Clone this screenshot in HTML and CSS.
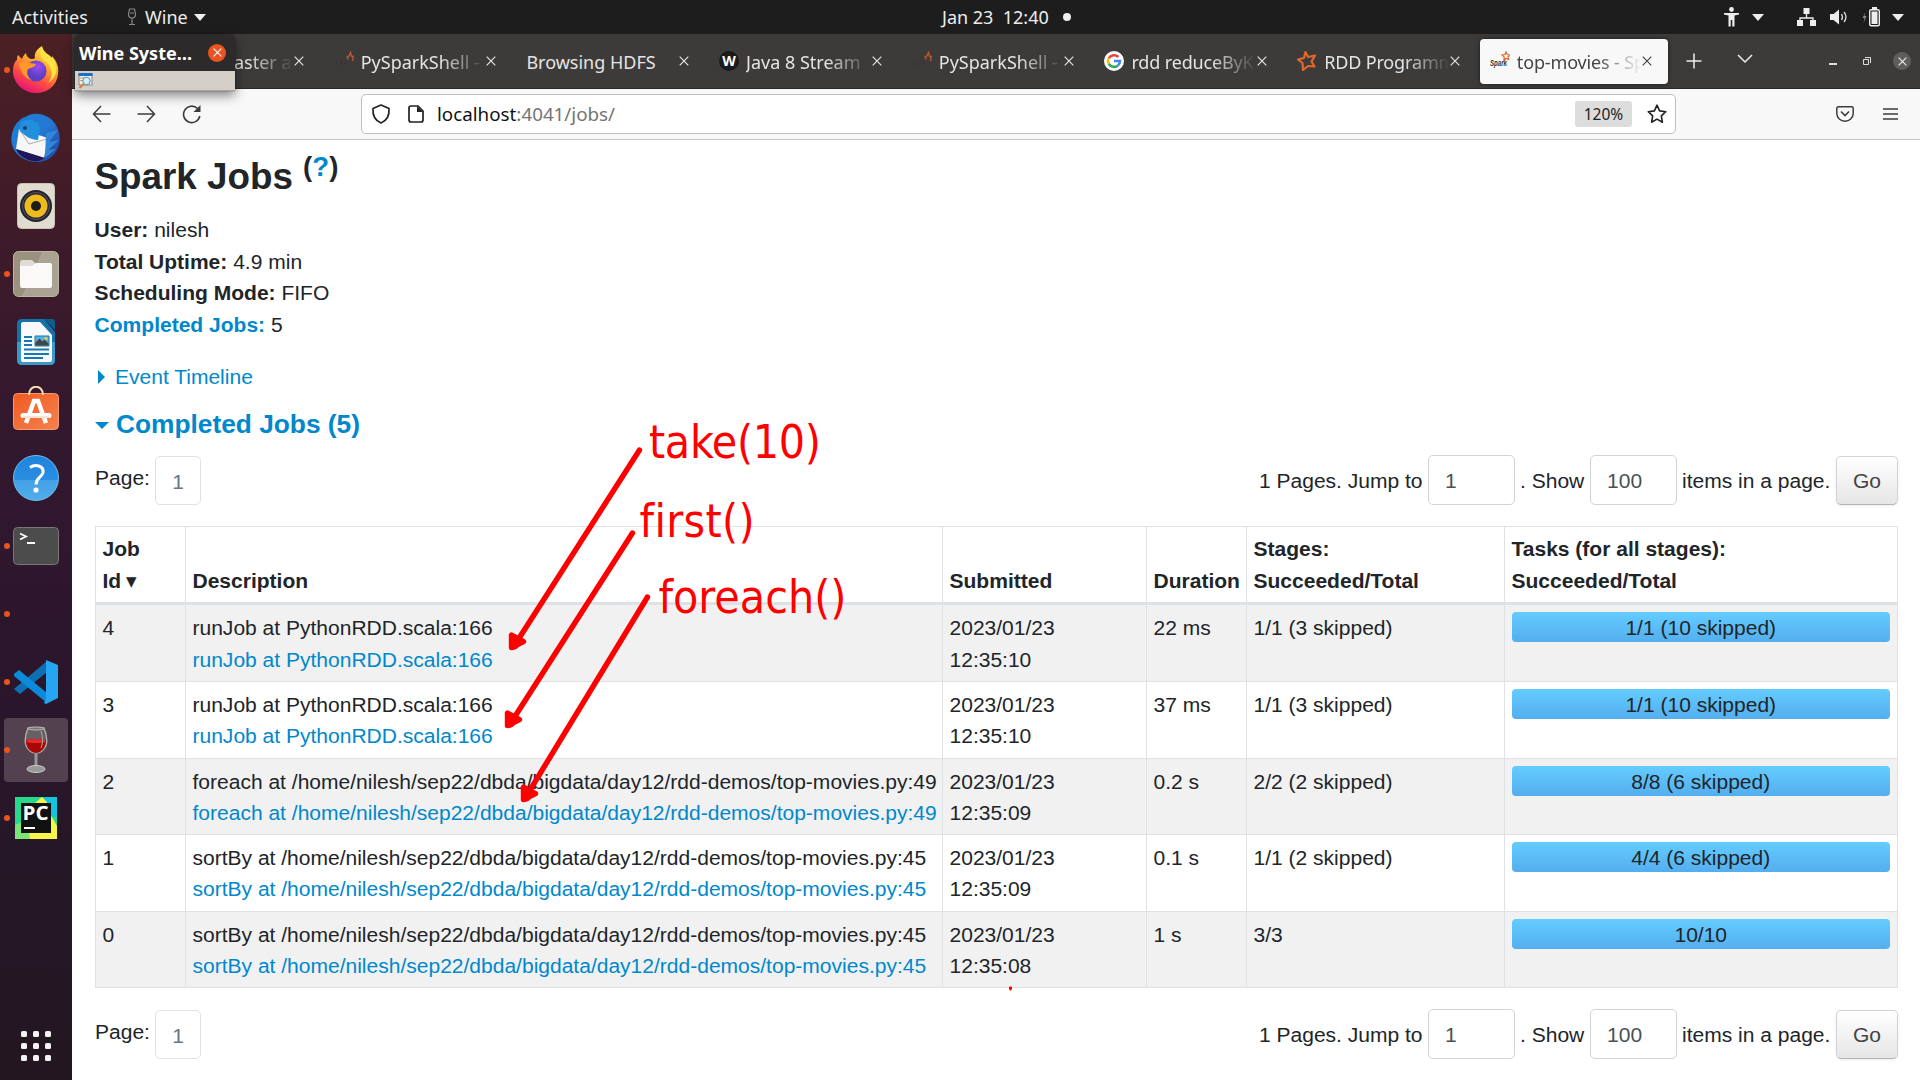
FILE: index.html
```html
<!DOCTYPE html>
<html lang="en">
<head>
<meta charset="utf-8">
<title>top-movies - Spark Jobs</title>
<link rel="stylesheet" href="styles.css">
</head>
<body>
<svg class="defs" width="0" height="0" aria-hidden="true">
  <symbol id="x" viewBox="0 0 10 10"><path d="M.7.7l8.6 8.6M9.3.7L.7 9.3" fill="none" stroke="currentColor" stroke-width="1.2"/></symbol>
  <symbol id="tri" viewBox="0 0 12 7"><path d="M0 0h12L6 7z" fill="currentColor"/></symbol>
  <symbol id="star-o" viewBox="0 0 20 20"><path d="M8.500 1l2.600 5 6.900-1.500-3.500 6 3 5-6.500-.5L6 19l-.5-7L1 8.500 7 7z" fill="none" stroke="#e2672b" stroke-width="2.200" stroke-linejoin="round"/></symbol>
  <symbol id="spark-mini" viewBox="0 0 20 20"><path d="M12.500 6l2.500-1 1.500-3.500L17.500 5l2.500.5-1.500 1.500.5 3M13.500 5.500l.5 3" fill="none" stroke="#b8572b" stroke-width="1.500"/><path d="M2 14l1-3M6 14l1-4M11 13l1-3" stroke="#343231"/></symbol>
</svg>

<header class="topbar">
  <span class="activities">Activities</span>
  <svg class="glass-mini" width="10" height="18" viewBox="0 0 10 18"><path d="M2.500 1h5l1 5c0 3-1.500 4-3.500 4S1.500 9 1.500 6zM5 10v6M2 16.500h6M3 5h4" fill="none" stroke="#8a8a8a" stroke-width="1.200"/></svg>
  <span class="appname">Wine</span>
  <svg class="tri" width="12" height="7"><use href="#tri"/></svg>
  <span class="clock">Jan 23&nbsp; 12:40</span><i class="notif"></i>
  <div class="tray">
    <svg width="15" height="20" viewBox="0 0 15 20"><circle cx="7.500" cy="2.500" r="2.400" fill="#eee"/><path d="M0 6h15v1.500l-4.500 1v11H8.300V13H6.700v6.500H4.500v-11L0 7.500z" fill="#eee"/></svg>
    <svg class="t1" width="12" height="7"><use href="#tri"/></svg>
    <svg class="t2" width="19" height="18" viewBox="0 0 19 18"><path d="M6.500 0h6v6h-6zM0 12h6v6H0zM13 12h6v6h-6z" fill="#eee"/><path d="M9.500 6v4M3 13v-3h13v3" stroke="#eee" stroke-width="1.300" fill="none"/></svg>
    <svg class="t3" width="19" height="16" viewBox="0 0 19 16"><path d="M0 5h3.500L9 .5v15L3.500 11H0z" fill="#eee"/><path d="M11.500 5q2 3 0 6M14 3q4 5 0 10" fill="none" stroke="#ddd" stroke-width="1.300"/></svg>
    <svg class="t4" width="18" height="20" viewBox="0 0 18 20"><path d="M3.500 5L.5 11h2l-1 5 3-7h-2z" fill="#888"/><rect x="7.700" y="2.700" width="9.600" height="16" rx="1.500" fill="none" stroke="#eee" stroke-width="1.400"/><path d="M10 0h5v2h-5zM9.500 4.500h6v12.500h-6z" fill="#eee"/></svg>
    <svg class="t5" width="12" height="7"><use href="#tri"/></svg>
  </div>
</header>

<div class="desk">
<nav class="dock">
  <div class="app run"><svg width="46" height="48" viewBox="0 0 46 48">
    <defs><linearGradient id="ff" x1=".8" y1="0" x2=".3" y2="1"><stop offset="0" stop-color="#fff44f"/><stop offset=".4" stop-color="#ffa52a"/><stop offset=".7" stop-color="#ff4a43"/><stop offset="1" stop-color="#e0107c"/></linearGradient><radialGradient id="fp" cx=".6" cy=".3"><stop offset="0" stop-color="#a04cf0"/><stop offset="1" stop-color="#5b3fc4"/></radialGradient></defs>
    <path d="M5 9c2 2 3 3 4 4 1-3 2-4 4-6 0 3 2 5 5 6 1 0 3 0 4-1-1-5 2-9 7-12 1 6 5 9 9 13 1-1 1-2 1-3 5 6 7 11 6 18-1 12-11 19-22 19S1 39 0 26C0 19 2 15 4 14c0-2 0-4 1-5z" fill="url(#ff)"/>
    <circle cx="23" cy="25" r="10.500" fill="url(#fp)"/><path d="M6 17c6-2 11 0 17 1-1 3-5 4-8 5-2 4 0 9 4 11-7-1-12-8-13-17z" fill="#ff9a28"/><path d="M29 1c-4 8 0 12 5 16 6 6 6 14 1 20 9-5 11-16 5-24-4-5-9-6-11-12z" fill="#ffe345"/></svg></div>
  <div class="app"><svg width="50" height="50" viewBox="0 0 50 50">
    <defs><linearGradient id="tb" x1="0" y1="0" x2="1" y2="1"><stop offset="0" stop-color="#1a7fd6"/><stop offset=".5" stop-color="#2478d2"/><stop offset="1" stop-color="#283c9a"/></linearGradient></defs>
    <path d="M16 3c10-5 23-1 29 9 7 13 4 28-9 35l-7 2C16 50 4 43 1 32-1 24 2 12 9 7c3-3 6-3 7-4z" fill="url(#tb)"/><path d="M8 16L37 25 33 45 5 36z" fill="#f7f7f7"/><path d="M8 16l10 15 18-5" fill="none" stroke="#999" stroke-width=".8"/><path d="M9 10c6-5 17-5 20 5l-2 12c-7 0-13-4-18-9z" fill="#2090dc"/><circle cx="14" cy="15" r="2" fill="#273a70"/><path d="M35 20l12-3-9 12 10-2-11 10 8-1-11 9z" fill="#3186d8"/><path d="M5 36l29 9-6 3C18 49 8 44 5 36z" fill="#221656"/></svg></div>
  <div class="app"><svg width="38" height="46" viewBox="0 0 38 46"><rect x=".5" y=".5" width="37" height="45" rx="4" fill="#e0dcd0" stroke="#c7c2b5"/><circle cx="19" cy="23" r="16" fill="#24232c"/><circle cx="19" cy="23" r="13.500" fill="none" stroke="#555566"/><circle cx="19" cy="23" r="11.500" fill="#edbb1e"/><circle cx="19" cy="23" r="5" fill="#1d1c1b"/></svg></div>
  <div class="app run"><svg width="46" height="46" viewBox="0 0 46 46"><rect x=".5" y=".5" width="45" height="45" rx="5" fill="#9a917f" stroke="#bcb5a6"/><path d="M29 1h12q4 0 4 4v36q0 4-4 4H9z" fill="#aaa293"/><path d="M7 12q0-3 3-3h9l4 4h15v22H7z" fill="#e0ddd5"/><path d="M7 15h12l4-3h14q2 0 2 2v21q0 2-2 2H9q-2 0-2-2z" fill="#faf9f8"/></svg></div>
  <div class="app"><svg width="38" height="46" viewBox="0 0 38 46"><path d="M5 0h22l11 13v28q0 5-5 5H5q-5 0-5-5V5q0-5 5-5z" fill="#1472aa"/><path d="M0 23h38v18q0 5-5 5H5q-5 0-5-5z" fill="#3b9acb"/><path d="M4 5q0-2 2-2h17l12 13v25q0 2-2 2H6q-2 0-2-2z" fill="#faf9f9"/><path d="M27 0h8q3 0 3 3v8z" fill="#0e5f8e"/><path d="M7 18h8M7 22h8M7 26h8M7 30.500h25M7 35h25M7 39h19" stroke="#1878b4" stroke-width="1.800"/><path d="M18 17h14v10H18z" fill="#55b4e2" stroke="#1878b4"/><path d="M18.500 26.500v-3l4-4 3 3 2-2 4 4v2z" fill="#444"/><circle cx="29" cy="19.500" r="1.500" fill="#fc3"/></svg></div>
  <div class="app"><svg class="lift" width="46" height="44" viewBox="0 0 46 44"><defs><linearGradient id="sw" x1="0" y1="0" x2="1" y2="1"><stop offset="0" stop-color="#f15a22"/><stop offset="1" stop-color="#f4824e"/></linearGradient></defs><rect x=".5" y="7.500" width="45" height="36" rx="4" fill="url(#sw)" stroke="#f79a70"/><path d="M16 9c0-11 14-11 14 0" fill="none" stroke="#f4dfae" stroke-width="2"/><path d="M13 37l8-22h4l8 22" fill="none" stroke="#fff" stroke-width="4.500"/><path d="M10 29.500h26" stroke="#fff" stroke-width="5" stroke-linecap="round"/><path d="M10 31h26" stroke="#fac6ae" stroke-width="1"/></svg></div>
  <div class="app"><svg width="46" height="46" viewBox="0 0 46 46"><defs><linearGradient id="hp" x1="0" y1="0" x2="0" y2="1"><stop offset="0" stop-color="#1e83dc"/><stop offset=".54" stop-color="#2a8fe2"/><stop offset=".55" stop-color="#43a0e5"/><stop offset="1" stop-color="#4faeea"/></linearGradient></defs><circle cx="23" cy="23" r="22.500" fill="url(#hp)" stroke="#73bdf0"/><path d="M17 12.500c5-3.500 14-2 13 5-1 5-7 5-7 12" fill="none" stroke="#fff" stroke-width="3"/><circle cx="23" cy="35" r="2.600" fill="#fff"/></svg></div>
  <div class="app run"><svg width="46" height="38" viewBox="0 0 46 38"><rect x=".5" y=".5" width="45" height="37" rx="4" fill="#4c4c4c" stroke="#777"/><path d="M7 6.500l6 3-6 3M14 16h8" fill="none" stroke="#fff" stroke-width="1.800"/></svg></div>
  <div class="app run"></div>
  <div class="app run"><svg width="44" height="44" viewBox="0 0 44 44"><path d="M33 12L6 34 1 30 0 29 33 1z" fill="#0f6fb3"/><path d="M5 10L33 33v10L0 16v-2z" fill="#0c8bdc"/><path d="M32 0l12 5v33l-12 6-2-1 2-4z" fill="#26a6f2"/></svg></div>
  <div class="app run active"><svg width="26" height="48" viewBox="0 0 26 48"><path d="M5 2h16c4 10 4 17-1 22-4 4-10 4-14 0C1 19 1 12 5 2z" fill="#666062" stroke="#aaa" stroke-width="1.500"/><path d="M3 14q10-2 20 0c0 6-3 12-10 13C6 26 3 21 3 14z" fill="#a90606"/><ellipse cx="13" cy="15" rx="10" ry="2" fill="#e52b2b"/><path d="M13 27v15" stroke="#999" stroke-width="3"/><ellipse cx="13" cy="43" rx="9" ry="3.500" fill="#999" stroke="#ccc"/><ellipse cx="13" cy="2.500" rx="8" ry="1.500" fill="#777" stroke="#bbb"/><path d="M18 5c2 6 2 12 0 17" stroke="#aaa" fill="none"/></svg></div>
  <div class="app run"><svg width="42" height="42" viewBox="0 0 42 42"><rect width="42" height="42" fill="#28d88f"/><path d="M30 0h12v20H34L26 2z" fill="#12c5dc"/><path d="M27 0l5 5 1 8 9 16v13H11l-1-7L20 6z" fill="#f8f549"/><path d="M0 28l12-5 3 19H0z" fill="#7de577"/><path d="M6 6h30v30H6z" fill="#111"/><path d="M9 31h11" stroke="#fff" stroke-width="2"/><text x="7.500" y="23" class="pc" textLength="26" lengthAdjust="spacingAndGlyphs">PC</text></svg></div>
  <svg class="grid" width="30" height="30" viewBox="0 0 30 30" fill="#f4f2f2"><rect width="6" height="6" rx="1.500"/><rect x="12" width="6" height="6" rx="1.500"/><rect x="24" width="6" height="6" rx="1.500"/><rect y="12" width="6" height="6" rx="1.500"/><rect x="12" y="12" width="6" height="6" rx="1.500"/><rect x="24" y="12" width="6" height="6" rx="1.500"/><rect y="24" width="6" height="6" rx="1.500"/><rect x="12" y="24" width="6" height="6" rx="1.500"/><rect x="24" y="24" width="6" height="6" rx="1.500"/></svg>
</nav>

<div class="browser">
  <div class="tabs">
    <div class="tab first"><span class="label">aster a</span><svg class="close"><use href="#x"/></svg></div>
    <div class="tab"><svg class="fav"><use href="#spark-mini"/></svg><span class="label">PySparkShell -</span><svg class="close"><use href="#x"/></svg></div>
    <div class="tab"><span class="label full">Browsing HDFS</span><svg class="close"><use href="#x"/></svg></div>
    <div class="tab"><svg class="fav" viewBox="0 0 20 20"><circle cx="10" cy="10" r="10" fill="#1a1a1a"/><text x="10" y="15" class="w">W</text></svg><span class="label">Java 8 Stream</span><svg class="close"><use href="#x"/></svg></div>
    <div class="tab"><svg class="fav"><use href="#spark-mini"/></svg><span class="label">PySparkShell -</span><svg class="close"><use href="#x"/></svg></div>
    <div class="tab"><svg class="fav" viewBox="0 0 20 20"><circle cx="10" cy="10" r="10" fill="#fff"/><g fill="none" stroke-width="2.600"><path d="M14.300 6A6 6 0 0 0 4.800 7.200" stroke="#ea4335"/><path d="M4.800 7.200a6 6 0 0 0 0 5.600" stroke="#fbbc05"/><path d="M4.800 12.800a6 6 0 0 0 9.200 1.600" stroke="#34a853"/><path d="M14 14.400a6 6 0 0 0 2-4.400h-6" stroke="#4285f4"/></g></svg><span class="label tight">rdd reduceByK</span><svg class="close"><use href="#x"/></svg></div>
    <div class="tab"><svg class="fav"><use href="#star-o"/></svg><span class="label tight">RDD Programm</span><svg class="close"><use href="#x"/></svg></div>
    <div class="tab on"><svg class="fav" viewBox="0 0 20 20"><text x="0" y="15" class="sp" textLength="17" lengthAdjust="spacingAndGlyphs">Spark</text><path d="M16 1l1.300 2.500 2.700.5-2 2 .5 2.500-2.500-1-2 1.500.2-3L12 4l3-.5z" fill="none" stroke="#e2672b" stroke-width="1.200"/></svg><span class="label tight">top-movies - Sp</span><svg class="close"><use href="#x"/></svg></div>
    <svg class="plus" width="16" height="16" viewBox="0 0 16 16"><path d="M8 .5v15M.5 8h15" stroke="#eee" stroke-width="1.500"/></svg>
    <svg class="down" width="16" height="10" viewBox="0 0 16 10"><path d="M1 1l7 7 7-7" fill="none" stroke="#eee" stroke-width="1.500"/></svg>
    <div class="winbtns"><i class="min"></i><svg width="8" height="8" viewBox="0 0 8 8"><path d="M.5 2.500h5v5h-5zM2 .5h5.500V6" fill="none" stroke="#ddd"/></svg><span class="wclose"><svg width="9" height="9"><use href="#x"/></svg></span></div>
  </div>
  <div class="toolbar">
    <svg class="b1" width="19" height="18" viewBox="0 0 19 18"><path d="M18.500 9H1.500M9 1L1.500 9 9 17" fill="none" stroke="#3c3c3c" stroke-width="1.500"/></svg>
    <svg class="b2" width="19" height="18" viewBox="0 0 19 18"><path d="M.5 9h17M10 1l7.500 8-7.500 8" fill="none" stroke="#3c3c3c" stroke-width="1.500"/></svg>
    <svg class="b3" width="20" height="20" viewBox="0 0 20 20"><path d="M17.800 12A8.200 8.200 0 1 1 15.500 4.500" fill="none" stroke="#3c3c3c" stroke-width="1.600"/><path d="M18.500 1v7h-7z" fill="#3c3c3c"/></svg>
    <div class="url">
      <svg width="20" height="20" viewBox="0 0 20 20"><path d="M10 1l8 3.500C18.500 11 16 16.500 10 19 4 16.500 1.500 11 2 4.500z" fill="none" stroke="#222" stroke-width="1.700" stroke-linejoin="round"/></svg>
      <svg class="doc" width="16" height="18" viewBox="0 0 16 18"><path d="M3 1h7l5 5v9q0 2-2 2H3q-2 0-2-2V3q0-2 2-2z" fill="none" stroke="#222" stroke-width="1.700"/><path d="M9 1v6h6z" fill="#222"/></svg>
      <span class="addr"><b>localhost</b>:4041/jobs/</span>
      <span class="zoom">120%</span>
      <svg width="20" height="20" viewBox="0 0 20 20"><path d="M10 1.200l2.600 5.700 6.200.8-4.500 4.200 1.100 6.300L10 15.100l-5.400 3.100 1.100-6.300L1.200 7.700l6.200-.8z" fill="none" stroke="#222" stroke-width="1.600" stroke-linejoin="round"/></svg>
    </div>
    <svg class="pocket" width="18" height="16" viewBox="0 0 18 16"><path d="M2.500.8h13q1.700 0 1.700 1.700v5C17 12 13.500 15.200 9 15.200S1 12 .8 7.500v-5Q.8.8 2.500.8z" fill="none" stroke="#3c3c3c" stroke-width="1.500"/><path d="M5 5.500l4 4 4-4" fill="none" stroke="#3c3c3c" stroke-width="1.600"/></svg>
    <svg width="15" height="12" viewBox="0 0 15 12"><path d="M0 1h15M0 6h15M0 11h15" stroke="#3c3c3c" stroke-width="1.400"/></svg>
  </div>

  <main class="page">
    <h3>Spark Jobs <sup>(<a>?</a>)</sup></h3>
    <ul class="summary">
      <li><strong>User:</strong> nilesh</li>
      <li><strong>Total Uptime:</strong> 4.9 min</li>
      <li><strong>Scheduling Mode:</strong> FIFO</li>
      <li><a><strong>Completed Jobs:</strong></a> 5</li>
    </ul>
    <div class="timeline"><i class="caret-r"></i><a>Event Timeline</a></div>
    <h4><i class="caret-d"></i><a>Completed Jobs (5)</a></h4>

    <div class="pager">
      <span class="plabel">Page:</span><span class="pnum">1</span>
      <span class="jump">1 Pages. Jump to</span><span class="field">1</span><span class="show">. Show</span><span class="field">100</span><span class="items">items in a page.</span><span class="go">Go</span>
    </div>

    <table>
      <colgroup><col class="c1"><col class="c2"><col class="c3"><col class="c4"><col class="c5"><col class="c6"></colgroup>
      <thead><tr><th>Job<br>Id <small>▾</small></th><th>Description</th><th>Submitted</th><th>Duration</th><th>Stages:<br>Succeeded/Total</th><th>Tasks (for all stages):<br>Succeeded/Total</th></tr></thead>
      <tbody>
        <tr><td>4</td><td>runJob at PythonRDD.scala:166<br><a>runJob at PythonRDD.scala:166</a></td><td>2023/01/23<br>12:35:10</td><td>22 ms</td><td>1/1 (3 skipped)</td><td><div class="bar">1/1 (10 skipped)</div></td></tr>
        <tr><td>3</td><td>runJob at PythonRDD.scala:166<br><a>runJob at PythonRDD.scala:166</a></td><td>2023/01/23<br>12:35:10</td><td>37 ms</td><td>1/1 (3 skipped)</td><td><div class="bar">1/1 (10 skipped)</div></td></tr>
        <tr><td>2</td><td>foreach at /home/nilesh/sep22/dbda/bigdata/day12/rdd-demos/top-movies.py:49<br><a>foreach at /home/nilesh/sep22/dbda/bigdata/day12/rdd-demos/top-movies.py:49</a></td><td>2023/01/23<br>12:35:09</td><td>0.2 s</td><td>2/2 (2 skipped)</td><td><div class="bar">8/8 (6 skipped)</div></td></tr>
        <tr><td>1</td><td>sortBy at /home/nilesh/sep22/dbda/bigdata/day12/rdd-demos/top-movies.py:45<br><a>sortBy at /home/nilesh/sep22/dbda/bigdata/day12/rdd-demos/top-movies.py:45</a></td><td>2023/01/23<br>12:35:09</td><td>0.1 s</td><td>1/1 (2 skipped)</td><td><div class="bar">4/4 (6 skipped)</div></td></tr>
        <tr><td>0</td><td>sortBy at /home/nilesh/sep22/dbda/bigdata/day12/rdd-demos/top-movies.py:45<br><a>sortBy at /home/nilesh/sep22/dbda/bigdata/day12/rdd-demos/top-movies.py:45</a></td><td>2023/01/23<br>12:35:08</td><td>1 s</td><td>3/3</td><td><div class="bar">10/10</div></td></tr>
      </tbody>
    </table>

    <div class="pager bottom">
      <span class="plabel">Page:</span><span class="pnum">1</span>
      <span class="jump">1 Pages. Jump to</span><span class="field">1</span><span class="show">. Show</span><span class="field">100</span><span class="items">items in a page.</span><span class="go">Go</span>
    </div>
  </main>
</div>
</div>

<div class="winewin">
  <div class="wtitle"><span>Wine Syste…</span><i><svg width="9" height="9"><use href="#x"/></svg></i></div>
  <div class="wbody"><svg width="15" height="16" viewBox="0 0 15 16"><rect x="1" y="1" width="13" height="11" fill="#e8eef2" stroke="#888"/><path d="M.5 0h14v3H.5z" fill="#1d6fc4"/><path d="M2 5h5M2 7.500h3" stroke="#caa64e"/><circle cx="8.500" cy="8" r="3.700" fill="#d3f0fa" stroke="#568db4"/><path d="M5.500 11L1.500 15" stroke="#d08030" stroke-width="2"/></svg></div>
</div>

<svg class="ink" width="1920" height="1080" viewBox="0 0 1920 1080">
  <g stroke="#f00" stroke-width="5.400" stroke-linecap="round" stroke-linejoin="round" fill="#f00">
    <path d="M639.500 450L516 643"/><path d="M511.500 635v12.500q4-.5 6-3l6-3z"/>
    <path d="M632.500 533L512 721"/><path d="M507.500 713v12.500q4-.5 6-3l6-3z"/>
    <path d="M647.500 597L527 795"/><path d="M523.500 787v12.500q4-.5 6-3l6-3z"/>
  </g>
  <path d="M1009 988h3M1010.500 986.500v4" stroke="#f00" stroke-width="2"/>
  <g class="note"><text x="649" y="457.500" letter-spacing="-.35">take(10)</text><text x="639.500" y="536.500" letter-spacing=".35">first()</text><text x="658.500" y="612.500">foreach()</text></g>
</svg>
</body>
</html>
```
FILE: styles.css
```css
* { box-sizing: border-box; }
html, body { margin: 0; width: 1920px; height: 1080px; overflow: hidden; }
body {
  position: relative; background: #fff; color: #212529;
  font: 21.03px/31.68px "Liberation Sans", Arial, sans-serif;
}
.defs { position: absolute; }
svg { display: block; flex: none; }
a { color: #0088cc; }

/* system bar */
.topbar {
  position: relative; height: 34px; background: #1d1d1d; color: #eee;
  display: flex; align-items: center; padding-left: 12px;
  font: 18px/34px "Noto Sans", sans-serif;
}
.activities { width: 115px; letter-spacing: .1px; }
.glass-mini { margin-right: 8px; }
.appname { width: 49px; }
.tri, .tray { color: #eee; }
.clock { margin-left: 736px; width: 115px; white-space: nowrap; }
.notif { width: 8px; height: 8px; border-radius: 50%; background: #eee; margin-left: 6px; }
.tray { margin-left: auto; display: flex; align-items: center; padding-right: 16px; }
.t1 { margin-left: 13px; }
.t2 { margin-left: 33px; }
.t3 { margin-left: 14px; }
.t4 { margin-left: 13px; }
.t5 { margin-left: 12px; }

.desk { display: flex; height: 1046px; }

/* dock */
.dock {
  width: 72px; flex: none; padding-top: 2px; display: flex; flex-direction: column; align-items: center;
  background: linear-gradient(#4c2024 0, #3f1b29 18%, #33182e 36%, #2b162c 62%, #261728 78%, #231620 100%);
}
.app { position: relative; width: 72px; height: 68px; display: flex; align-items: center; justify-content: center; }
.lift { margin-top: -5px; }
.run::before { content: ""; position: absolute; left: 4px; top: 31px; width: 6px; height: 6px; border-radius: 50%; background: #e95420; }
.active { width: 64px; height: 64px; margin: 2px 0; background: #54414f; border-radius: 4px; }
.active::before { left: 0; top: 29px; }
.pc { font: bold 20px "Open Sans", sans-serif; fill: #fff; }
.grid { margin: auto 0 19px; }

/* browser chrome */
.browser { flex: 1; min-width: 0; display: flex; flex-direction: column; }
.tabs {
  height: 55px; flex: none; background: #3d3b3a; border-bottom: 1px solid #2a2829; color: #e4e4e4;
  display: flex; align-items: center; padding-left: 56px;
  font: 18px/46px "Noto Sans", sans-serif;
}
.tab { width: 192.7px; height: 45px; display: flex; align-items: center; padding: 0 17px 0 13px; flex: none; }
.fav { width: 20px; height: 20px; margin-right: 7px; }
.label {
  flex: 1; min-width: 0; white-space: nowrap; padding-top: 1px;
  -webkit-mask-image: linear-gradient(90deg, #000 calc(100% - 46px), transparent 100%);
  mask-image: linear-gradient(90deg, #000 calc(100% - 46px), transparent 100%);
}
.tight { letter-spacing: -.15px; }
.full { -webkit-mask-image: none; mask-image: none; }
.close { width: 10px; height: 10px; }
.first .label { margin-left: 93px; }
.on {
  width: 188px; margin: 0 1.5px 0 3px; background: #f8f8f8; color: #444; border-radius: 4px;
  box-shadow: 0 0 4px #1a1a1a; padding: 0 16px 0 10px;
}
.w { font: bold 14px "Open Sans", sans-serif; fill: #fff; text-anchor: middle; }
.sp { font: italic bold 9px "Liberation Sans", sans-serif; fill: #333; }
.plus { margin-left: 17px; }
.down { margin: -4px 0 0 35px; }
.winbtns { margin-left: auto; margin-right: 9px; display: flex; align-items: center; color: #eee; }
.min { width: 8px; height: 1.5px; background: #ddd; margin: 6px 26px 0 0; }
.wclose { width: 18px; height: 18px; border-radius: 50%; background: #5f5e5d; margin-left: 22px; display: flex; align-items: center; justify-content: center; }
.toolbar {
  height: 51px; flex: none; background: #f8f8f8; border-bottom: 1px solid #c4c4c4;
  display: flex; align-items: center; padding: 0 22px 0 20px;
}
.b2 { margin-left: 26px; }
.b3 { margin-left: 26px; }
.url {
  width: 1315px; height: 40px; margin-left: 159px; border: 1px solid #bfbfbf; border-radius: 5px; background: #fff;
  display: flex; align-items: center; padding: 0 8px 0 9px;
}
.doc { margin-left: 17px; }
.addr { flex: 1; margin-left: 13px; font: 18.8px/38px "Noto Sans", sans-serif; color: #757575; }
.addr b { font-weight: 400; color: #111; }
.zoom { width: 57px; height: 26px; background: #ddd; border-radius: 3px; margin-right: 15px; text-align: center; color: #222; font: 15.500px/26px "Noto Sans", sans-serif; }
.pocket { margin: 0 29px 0 auto; }

/* page */
.page { padding: 15px 22px 0 23px; }
h3 { margin: 0; height: 57px; font-size: 36.8px; line-height: 44px; font-weight: 700; margin-left: -.5px; }
h3 sup { font-size: 27.6px; line-height: 0; vertical-align: baseline; position: relative; top: -13px; }
.summary { list-style: none; margin: 2px 0 0 -.4px; padding: 0; }
.timeline { display: flex; align-items: center; margin-top: 20px; }
.caret-r { margin: 0 10px 0 3px; border: 7px solid transparent; border-left-color: #0088cc; border-right: 0; }
h4 { margin: 14px 0 0; display: flex; align-items: center; font-size: 26.3px; line-height: 36px; font-weight: 700; }
.caret-d { margin: 3px 7px 0 0; border: 7px solid transparent; border-top-color: #0088cc; border-bottom: 0; }
.pager { height: 50px; margin-top: 13px; display: flex; align-items: center; white-space: nowrap; }
.plabel { width: 60px; margin-top: -6px; }
.pnum { width: 46px; height: 49px; border: 1px solid #dee2e6; border-radius: 5px; color: #6c757d; text-align: center; line-height: 49px; }
.jump { margin-left: auto; width: 169px; }
.field { width: 87px; height: 50px; border: 1px solid #ced4da; border-radius: 5px; color: #495057; line-height: 49px; padding-left: 16px; }
.show { width: 75px; padding-left: 5px; }
.items { width: 159px; padding-left: 5px; }
.go {
  width: 62px; height: 49px; border: 1px solid #ced4da; border-bottom-color: #b3b3b3; border-radius: 5px; color: #444;
  line-height: 48px; text-align: center; background: linear-gradient(#fff, #e6e6e6); box-shadow: 0 1px 3px rgba(0,0,0,.08);
}
table { table-layout: fixed; width: 1803px; margin-top: 21px; border-collapse: separate; border-spacing: 0; border-top: 1px solid #dee2e6; border-left: 1px solid #dee2e6; }
.c1 { width: 90px; } .c2 { width: 757px; } .c3 { width: 204px; } .c4 { width: 100px; } .c5 { width: 258px; } .c6 { width: 393px; }
th { height: 78px; padding: 0 0 6px 6.5px; border-right: 1px solid #dee2e6; border-bottom: 3px solid #dee2e6; text-align: left; vertical-align: bottom; white-space: nowrap; }
th small { font: 400 21px/1 "DejaVu Sans", sans-serif; margin-left: -1px; }
td { height: 76px; padding: 6.4px 7px 5px 6.5px; border-right: 1px solid #dee2e6; border-bottom: 1px solid #dee2e6; vertical-align: top; white-space: nowrap; line-height: 31.5px; }
tbody tr:nth-child(odd) { background: #f1f1f1; }
tbody tr:first-child td { height: 77px; padding-top: 7px; }
tbody tr:nth-child(even) td { height: 77px; }
.bar { height: 30px; line-height: 32px; text-align: center; border-radius: 4px; background: linear-gradient(#64ccff, #54aeee); }
.bottom { margin-top: 21px; }

/* floating tray window */
.winewin { position: absolute; left: 75px; top: 34px; width: 160px; box-shadow: 0 4px 12px rgba(0,0,0,.5), 0 0 1px #000; border-radius: 7px 7px 0 0; }
.wtitle { height: 37px; background: #2d2a2b; border-radius: 7px 7px 0 0; display: flex; align-items: center; padding-left: 4px; color: #fff; font: bold 18px/36px "Noto Sans", sans-serif; }
.wtitle span { width: 129px; white-space: nowrap; }
.wtitle i { width: 18px; height: 18px; border-radius: 50%; background: #e95420; display: flex; align-items: center; justify-content: center; }
.wbody { height: 20px; background: #d4cfc8; border-bottom: 1px solid #a9a5a0; padding: 2px 0 0 3px; }

/* hand-drawn notes */
.ink { position: absolute; left: 0; top: 0; pointer-events: none; }
.note { font: 46px "DejaVu Sans Condensed", "DejaVu Sans", sans-serif; font-stretch: condensed; fill: #f00; }
```
